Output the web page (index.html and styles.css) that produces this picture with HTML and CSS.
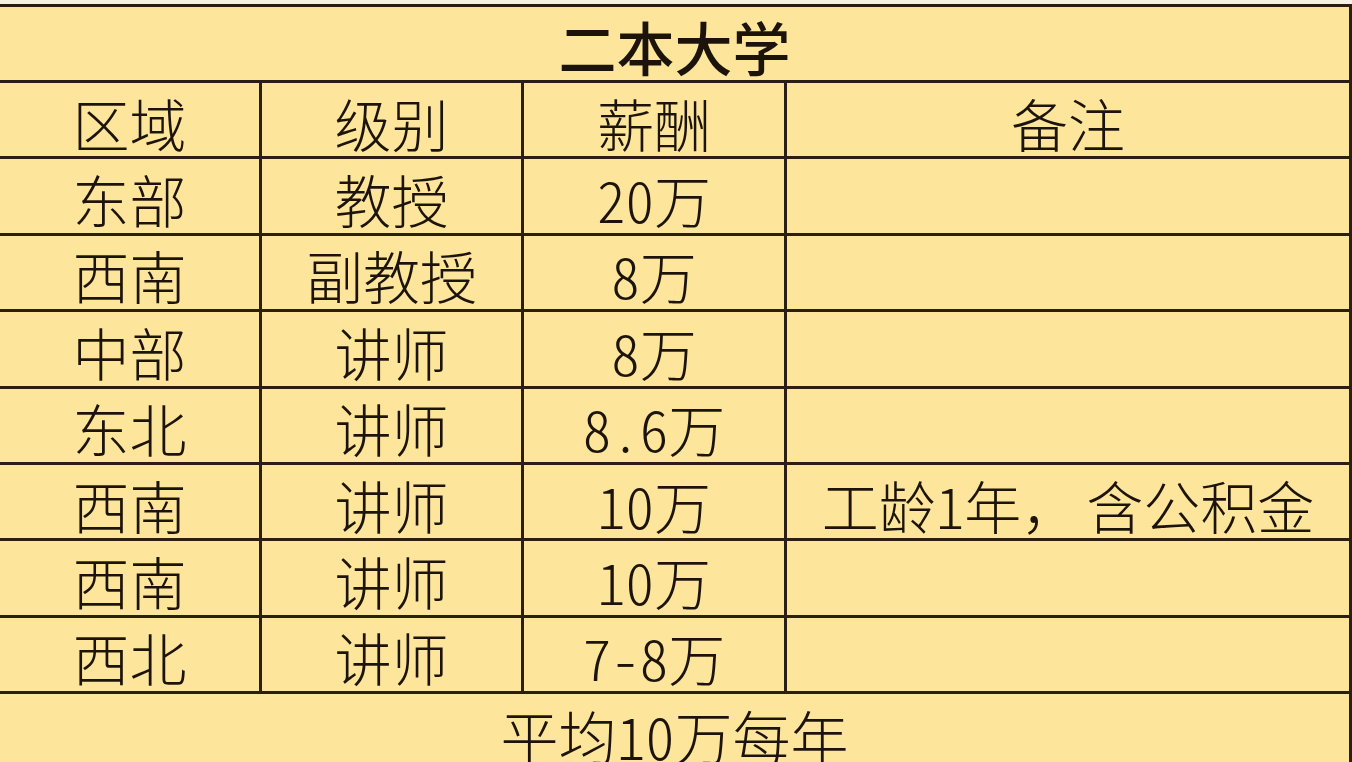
FILE: index.html
```html
<!DOCTYPE html>
<html lang="zh-CN">
<head>
<meta charset="utf-8">
<title>二本大学</title>
<link rel="stylesheet" href="styles.css">
</head>
<body>
<div class="sheet">
  <div class="cell span title">二本大学</div>

  <div class="cell">区域</div>
  <div class="cell">级别</div>
  <div class="cell">薪酬</div>
  <div class="cell last">备注</div>

  <div class="cell">东部</div>
  <div class="cell">教授</div>
  <div class="cell">20万</div>
  <div class="cell last"></div>

  <div class="cell">西南</div>
  <div class="cell">副教授</div>
  <div class="cell">8万</div>
  <div class="cell last"></div>

  <div class="cell">中部</div>
  <div class="cell">讲师</div>
  <div class="cell">8万</div>
  <div class="cell last"></div>

  <div class="cell">东北</div>
  <div class="cell">讲师</div>
  <div class="cell">8.6万</div>
  <div class="cell last"></div>

  <div class="cell">西南</div>
  <div class="cell">讲师</div>
  <div class="cell">10万</div>
  <div class="cell last">工龄1年<span class="fw">，</span>含公积金</div>

  <div class="cell">西南</div>
  <div class="cell">讲师</div>
  <div class="cell">10万</div>
  <div class="cell last"></div>

  <div class="cell">西北</div>
  <div class="cell">讲师</div>
  <div class="cell">7-8万</div>
  <div class="cell last"></div>

  <div class="cell span footer">平均10万每年</div>
</div>
</body>
</html>
```

FILE: styles.css
```css
html, body {
  margin: 0;
  padding: 0;
  background: #f6f2e6;
  overflow: hidden;
}

.sheet {
  margin-top: 4px;
  width: 1352px;
  box-sizing: border-box;
  background: #fde69b;
  border-top: 3px solid #2a1f12;
  border-right: 3px solid #2a1f12;
  display: grid;
  grid-template-columns: 262px 262px 263px 1fr;
  grid-template-rows: 76px repeat(9, 76.4px);
  font-family: "Noto Sans CJK SC", sans-serif;
  font-feature-settings: "hwid";
  font-weight: 300;
  font-size: 57px;
  color: #1c140a;
}

.cell {
  box-sizing: border-box;
  border-bottom: 3px solid #2a1f12;
  border-right: 3px solid #2a1f12;
  display: flex;
  align-items: center;
  justify-content: center;
  padding-top: 4px;
  white-space: nowrap;
}

.cell.last {
  border-right: none;
}

.cell.span {
  grid-column: 1 / -1;
  border-right: none;
}

.fw {
  font-feature-settings: normal;
  padding-right: 8px;
}

.title {
  font-weight: 500;
  font-size: 58px;
}

.footer {
  border-bottom: none;
  align-items: flex-start;
  padding-top: 12px;
  line-height: 1;
  font-size: 58px;
}
```
